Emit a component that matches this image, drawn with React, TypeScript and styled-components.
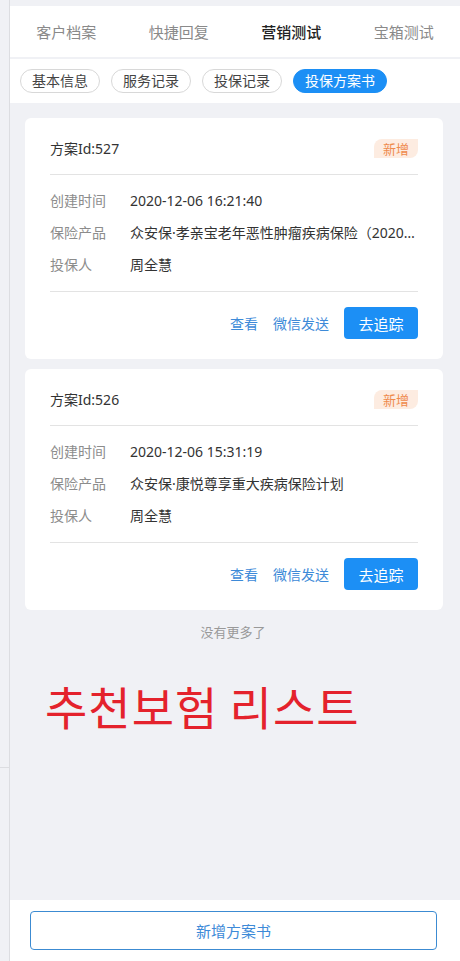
import styled, { createGlobalStyle } from 'styled-components';

const BG_GRAY = '#f0f1f5';
const BLUE = '#1c8ff5';
const LINK_BLUE = '#3d8ad8';

const GlobalStyle = createGlobalStyle`
  html, body {
    margin: 0;
    padding: 0;
    background: ${BG_GRAY};
  }
  * {
    box-sizing: border-box;
  }
  body {
    font-family: "Noto Sans", "Noto Sans CJK SC", sans-serif;
  }
`;

const Page = styled.div`
  width: 460px;
  height: 961px;
  display: flex;
  overflow: hidden;
`;

const LeftRail = styled.div`
  width: 10px;
  flex-shrink: 0;
  background: ${BG_GRAY};
  border-right: 1px solid #dcdde1;
  display: flex;
  flex-direction: column;
`;

const RailRule = styled.div<{ $top: number }>`
  margin-top: ${(p) => p.$top}px;
  height: 1px;
  background: #dcdde1;
`;

const Main = styled.div`
  flex: 1;
  min-width: 0;
  display: flex;
  flex-direction: column;
  padding-top: 6px;
  background: ${BG_GRAY};
`;

const TabBar = styled.nav`
  height: 53px;
  display: flex;
  background: #fff;
  border-bottom: 2px solid ${BG_GRAY};
`;

const Tab = styled.div<{ $active?: boolean }>`
  flex: 1;
  display: flex;
  align-items: center;
  justify-content: center;
  padding-bottom: 1px;
  font-size: 15px;
  color: ${(p) => (p.$active ? '#222' : '#8a8a8a')};
  font-weight: ${(p) => (p.$active ? 500 : 400)};
`;

const PillRow = styled.div`
  height: 44px;
  display: flex;
  align-items: center;
  gap: 11px;
  padding: 0 10px;
  background: #fff;
`;

const Pill = styled.div<{ $active?: boolean }>`
  height: 24px;
  padding: 0 11px;
  display: flex;
  align-items: center;
  border-radius: 12px;
  font-size: 14px;
  line-height: 1;
  border: 1px solid ${(p) => (p.$active ? BLUE : '#d8d8d8')};
  background: ${(p) => (p.$active ? BLUE : '#fff')};
  color: ${(p) => (p.$active ? '#fff' : '#444')};
`;

const Content = styled.div`
  flex: 1;
  min-width: 0;
  display: flex;
  flex-direction: column;
  gap: 10px;
  padding: 15px 17px 0 15px;
`;

const Card = styled.section`
  background: #fff;
  border-radius: 6px;
  padding: 0 25px;
  min-width: 0;
`;

const CardHeader = styled.div`
  height: 57px;
  padding-top: 20px;
  display: flex;
  justify-content: space-between;
  align-items: flex-start;
  border-bottom: 1px solid #e3e3e3;
`;

const PlanId = styled.span`
  font-size: 14px;
  line-height: 22px;
  color: #333;
`;

const Badge = styled.span`
  margin-top: 1px;
  width: 44px;
  height: 19px;
  display: flex;
  align-items: center;
  justify-content: center;
  font-size: 13px;
  color: #ef8a4c;
  background: #fdece1;
  border-radius: 8px 0 8px 0;
`;

const InfoList = styled.div`
  padding: 9px 0 11px;
  border-bottom: 1px solid #e3e3e3;
`;

const InfoRow = styled.div`
  height: 32px;
  display: flex;
  align-items: center;
  font-size: 14px;
`;

const InfoLabel = styled.span`
  width: 80px;
  flex-shrink: 0;
  color: #8c8c8c;
`;

const InfoValue = styled.span`
  flex: 1;
  min-width: 0;
  color: #333;
  white-space: nowrap;
  overflow: hidden;
  text-overflow: ellipsis;
`;

const CardActions = styled.div`
  padding: 15px 0 20px;
  display: flex;
  justify-content: flex-end;
  align-items: center;
  gap: 15px;
`;

const LinkButton = styled.span`
  font-size: 14px;
  color: ${LINK_BLUE};
`;

const PrimaryButton = styled.button`
  width: 74px;
  height: 32px;
  border: none;
  border-radius: 4px;
  background: ${BLUE};
  color: #fff;
  font-family: inherit;
  font-size: 15px;
  padding: 0;
`;

const EndNote = styled.div`
  margin-top: 3px;
  text-align: center;
  font-size: 13px;
  line-height: 18px;
  color: #999;
  padding-right: 2px;
`;

const Headline = styled.div`
  margin-top: 26px;
  padding-left: 20px;
  font-family: "Noto Sans CJK KR", sans-serif;
  font-size: 46px;
  line-height: 56px;
  letter-spacing: 1px;
  color: #e4222c;
`;

const Footer = styled.footer`
  height: 61px;
  padding: 11px 23px 0 20px;
  background: #fff;
`;

const OutlineButton = styled.button`
  width: 100%;
  height: 39px;
  border: 1px solid #3c8bd2;
  border-radius: 4px;
  background: #fff;
  color: ${LINK_BLUE};
  font-family: inherit;
  font-size: 15px;
`;

type Plan = {
  id: number;
  created: string;
  product: string;
  holder: string;
};

const plans: Plan[] = [
  {
    id: 527,
    created: '2020-12-06 16:21:40',
    product: '众安保·孝亲宝老年恶性肿瘤疾病保险（2020版）',
    holder: '周全慧',
  },
  {
    id: 526,
    created: '2020-12-06 15:31:19',
    product: '众安保·康悦尊享重大疾病保险计划',
    holder: '周全慧',
  },
];

const tabs = ['客户档案', '快捷回复', '营销测试', '宝箱测试'];
const pills = ['基本信息', '服务记录', '投保记录', '投保方案书'];

function PlanCard({ plan }: { plan: Plan }) {
  return (
    <Card>
      <CardHeader>
        <PlanId>方案Id:{plan.id}</PlanId>
        <Badge>新增</Badge>
      </CardHeader>
      <InfoList>
        <InfoRow>
          <InfoLabel>创建时间</InfoLabel>
          <InfoValue>{plan.created}</InfoValue>
        </InfoRow>
        <InfoRow>
          <InfoLabel>保险产品</InfoLabel>
          <InfoValue>{plan.product}</InfoValue>
        </InfoRow>
        <InfoRow>
          <InfoLabel>投保人</InfoLabel>
          <InfoValue>{plan.holder}</InfoValue>
        </InfoRow>
      </InfoList>
      <CardActions>
        <LinkButton>查看</LinkButton>
        <LinkButton>微信发送</LinkButton>
        <PrimaryButton>去追踪</PrimaryButton>
      </CardActions>
    </Card>
  );
}

export default function App() {
  return (
    <>
      <GlobalStyle />
      <Page>
        <LeftRail>
          <RailRule $top={767} />
        </LeftRail>
        <Main>
          <TabBar>
            {tabs.map((t) => (
              <Tab key={t} $active={t === '营销测试'}>
                {t}
              </Tab>
            ))}
          </TabBar>
          <PillRow>
            {pills.map((p) => (
              <Pill key={p} $active={p === '投保方案书'}>
                {p}
              </Pill>
            ))}
          </PillRow>
          <Content>
            {plans.map((plan) => (
              <PlanCard key={plan.id} plan={plan} />
            ))}
            <EndNote>没有更多了</EndNote>
            <Headline>추천보험 리스트</Headline>
          </Content>
          <Footer>
            <OutlineButton>新增方案书</OutlineButton>
          </Footer>
        </Main>
      </Page>
    </>
  );
}
